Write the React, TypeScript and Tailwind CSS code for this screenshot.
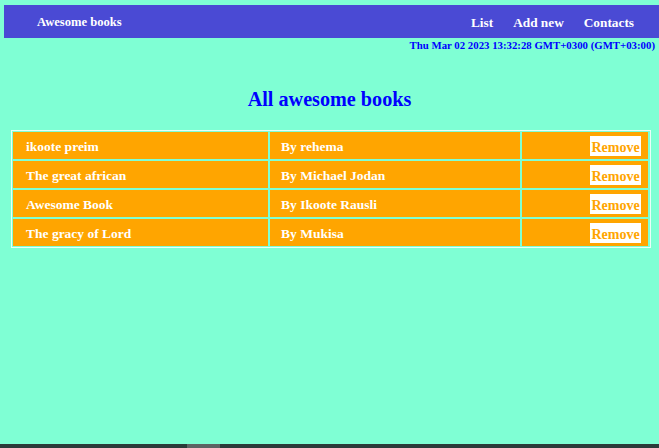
import React from "react";

const books = [
  { title: "ikoote preim", author: "rehema" },
  { title: "The great african", author: "Michael Jodan" },
  { title: "Awesome Book", author: "Ikoote Rausli" },
  { title: "The gracy of Lord", author: "Mukisa" },
];

export default function App() {
  return (
    <div
      className="min-h-[448px] w-full bg-[#7fffd4] pt-[5px] font-bold"
      style={{ fontFamily: '"Liberation Serif", "Times New Roman", serif' }}
    >
      <nav className="ml-[4px] flex h-[33px] items-center bg-[#4a4ad4] pt-[2px] text-white">
        <span className="ml-[33px] text-[12.6px]">Awesome books</span>
        <ul className="ml-auto mr-[25px] flex items-center gap-[20px] text-[13.3px]">
          <li>List</li>
          <li>Add new</li>
          <li>Contacts</li>
        </ul>
      </nav>
      <div className="flex justify-end pr-[4px] pt-[1px] text-[10.8px] leading-[13px] text-[#0000ff]">
        Thu Mar 02 2023 13:32:28 GMT+0300 (GMT+03:00)
      </div>
      <h1 className="mt-[35px] text-center text-[20.2px] leading-[24px] text-[#0000ff]">
        All awesome books
      </h1>
      <div className="ml-[11px] mt-[19px] w-[640px] border border-[#e8fff8] p-[1px]">
        <div className="flex flex-col gap-[2px]">
          {books.map((b) => (
            <div key={b.title} className="flex h-[27px] gap-[2px] text-[13.5px] text-white">
              <div className="flex w-[255px] items-center bg-[#ffa500] pl-[13px] pt-[3px]">{b.title}</div>
              <div className="flex w-[250px] items-center bg-[#ffa500] pl-[11px] pt-[3px]">By {b.author}</div>
              <div className="flex w-[126px] items-center justify-end bg-[#ffa500] pr-[7px] pt-[1px]">
                <button className="h-[20px] w-[51px] bg-white pt-[1px] text-[14px] font-bold text-[#ffa500]">
                  Remove
                </button>
              </div>
            </div>
          ))}
        </div>
      </div>
      <div className="fixed bottom-0 left-0 h-[4px] w-full bg-[#2b3b39]">
        <div className="ml-[187px] h-full w-[33px] bg-[#5c6463]" />
      </div>
    </div>
  );
}
